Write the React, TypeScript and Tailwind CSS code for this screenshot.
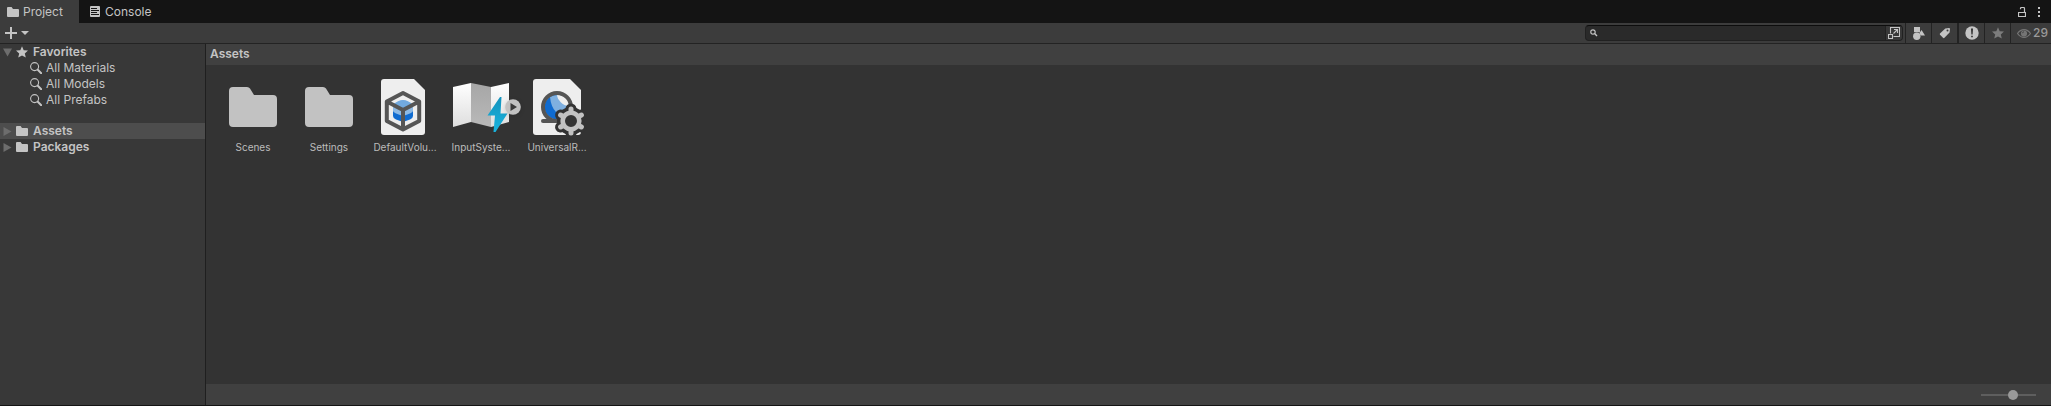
import { useState } from "react";
import type { ReactNode } from "react";

const STAR = "M6 0.3 7.7 4.2 12 4.6 8.8 7.4 9.8 11.6 6 9.4 2.2 11.6 3.2 7.4 0 4.6 4.3 4.2Z";

const FolderIcon = () => (
  <svg width="12" height="10" viewBox="0 0 12 10" className="shrink-0">
    <path d="M0 1Q0 0 1 0H4.6L6 2H11Q12 2 12 3V9Q12 10 11 10H1Q0 10 0 9Z" fill="#c4c4c4" />
  </svg>
);

const ConsoleIcon = () => (
  <svg width="10" height="11" viewBox="0 0 10 11" className="shrink-0">
    <rect width="10" height="11" rx="1" fill="#c4c4c4" />
    <path d="M1 2.5H7M1 4.5H9M1 6.5H7M1 8.5H9" stroke="#141414" />
  </svg>
);

const StarIcon = ({ color }: { color: string }) => (
  <svg width="12" height="12" viewBox="0 0 12 12" className="shrink-0">
    <path d={STAR} fill={color} />
  </svg>
);

const MagnifierIcon = () => (
  <svg width="12" height="12" viewBox="0 0 12 12" className="shrink-0">
    <circle cx="4.6" cy="4.6" r="4" fill="none" stroke="#c4c4c4" strokeWidth="1.1" />
    <path d="M7.8 7.8 11.2 11.2" stroke="#c4c4c4" strokeWidth="2" strokeLinecap="round" />
  </svg>
);

const LockIcon = () => (
  <svg width="8" height="10" viewBox="0 0 8 10">
    <path d="M0.5 5.5H7.5V9.5H0.5ZM2.5 2.2V1.5Q2.5 0.5 3.5 0.5H5.5Q6.5 0.5 6.5 1.5V5.5" fill="none" stroke="#c4c4c4" strokeWidth="1.2" />
  </svg>
);

const KebabIcon = () => (
  <svg width="2" height="10" viewBox="0 0 2 10">
    <path d="M0 0H2V2H0ZM0 4H2V6H0ZM0 8H2V10H0Z" fill="#c4c4c4" />
  </svg>
);

const OpenSearchIcon = () => (
  <svg width="12" height="12" viewBox="0 0 12 12">
    <path d="M2.5 6.5V0.5H11.5V9.5H5.5M0.5 7.5H4.5V11.5H0.5ZM5.5 6.5 9 3M6 2.5H9.5V6" fill="none" stroke="#c4c4c4" strokeWidth="1.1" />
  </svg>
);

const TypeIcon = () => (
  <svg width="12" height="13" viewBox="0 0 12 13">
    <path d="M1 0H7V5.2H1Z" fill="#c4c4c4" />
    <path d="M8.6 3 12 8.6H7.6L6.4 6Z" fill="#c4c4c4" />
    <circle cx="3.8" cy="9.3" r="3.7" fill="#c4c4c4" />
  </svg>
);

const TagIcon = () => (
  <svg width="12" height="12" viewBox="0 0 12 12">
    <path d="M6.3 1.4 10 1Q11 1 11 2L10.6 5.6 5.2 11Q4.6 11.4 4 10.8L1 7.8Q0.5 7.2 1 6.6Z" fill="#c4c4c4" />
    <circle cx="8.5" cy="3.6" r="1" fill="#3c3c3c" />
  </svg>
);

const ImportLogIcon = () => (
  <svg width="14" height="14" viewBox="0 0 14 14">
    <circle cx="7" cy="7" r="6.7" fill="#c4c4c4" />
    <path d="M6 2.5H8L7.6 8.5H6.4ZM6.2 9.7H7.8V11.3H6.2Z" fill="#2e2e2e" />
  </svg>
);

const EyeIcon = () => (
  <svg width="14" height="9" viewBox="0 0 14 9" className="shrink-0">
    <path d="M0.5 4.5Q3.2 0.6 7 0.6T13.5 4.5Q10.8 8.4 7 8.4T0.5 4.5Z" fill="none" stroke="#757575" strokeWidth="1.2" />
    <circle cx="7" cy="4.5" r="3.1" fill="#757575" />
    <path d="M5.4 4.2Q5.6 2.9 7 2.7" fill="none" stroke="#3c3c3c" strokeWidth="0.8" />
  </svg>
);

const Arrow = ({ open }: { open: boolean }) => (
  <svg width="9" height="9" viewBox="0 0 9 9">
    <path d={open ? "M0 0.5H9L4.5 8.5Z" : "M0.5 0V9L8.5 4.5Z"} fill="#6d6d6d" />
  </svg>
);

const BigFolder = () => (
  <svg width="64" height="64" viewBox="0 0 64 64">
    <path d="M8 16Q8 12 12 12H26Q28 12 29 13.5L33 20H52Q56 20 56 24V48Q56 52 52 52H12Q8 52 8 48Z" fill="#c2c2c2" />
  </svg>
);

const VolumeIcon = () => (
  <svg width="64" height="64" viewBox="0 0 64 64">
    <path d="M8 7Q8 4 11 4H41L52 15V57Q52 60 49 60H11Q8 60 8 57Z" fill="#eeeeee" />
    <path d="M20 34V41Q20 43 23 44.5L28 46.2Q30 46.8 32 46.2L37 44.5Q40 43 40 41V34Z" fill="#0f6bd0" />
    <path d="M20 29 30 25 40 29V36Q40 38 30 41Q20 38 20 36Z" fill="#8db9e4" />
    <path d="M20 30Q30 20 40 30L30 36Z" fill="#72a9de" />
    <path d="M30 18 46.2 26.5V46L30 54.4 13.8 46V26.5ZM13.8 26.5 30 35 46.2 26.5M30 35V54" fill="none" stroke="#555555" strokeWidth="4" strokeLinejoin="round" />
  </svg>
);

const InputActionsIcon = () => (
  <svg width="64" height="64" viewBox="0 0 64 64">
    <defs>
      <linearGradient id="mapLight" x1="0" y1="0" x2="0" y2="1">
        <stop offset="0" stopColor="#ffffff" />
        <stop offset="1" stopColor="#dedede" />
      </linearGradient>
      <linearGradient id="mapShade" x1="0" y1="0" x2="0" y2="1">
        <stop offset="0" stopColor="#a6a6a6" />
        <stop offset="1" stopColor="#b9b9b9" />
      </linearGradient>
      <linearGradient id="bolt" x1="0" y1="0" x2="0" y2="1">
        <stop offset="0" stopColor="#1593bd" />
        <stop offset="1" stopColor="#19b4df" />
      </linearGradient>
    </defs>
    <path d="M4 12 22 8V47L4 52Z" fill="url(#mapLight)" />
    <path d="M22 8 42 12V52L22 47Z" fill="url(#mapShade)" />
    <path d="M42 12 60 8V47L42 52Z" fill="url(#mapLight)" />
    <path d="M51 22 38.5 40.5H46L44.5 57H46.5L58.5 38.5H51.5L52.5 22Z" fill="url(#bolt)" />
  </svg>
);

const PipelineIcon = () => (
  <svg width="64" height="64" viewBox="0 0 64 64">
    <path d="M8 7Q8 4 11 4H45L56 15V57Q56 60 53 60H11Q8 60 8 57Z" fill="#eeeeee" />
    <circle cx="32" cy="32" r="12.5" fill="#0f6bd0" />
    <path d="M25 22Q32 18 39 22L45 34 41 42Q36 42 31 37Q26 32 25 22Z" fill="#7fb0e0" />
    <path d="M32 19.5Q43 20 44.5 31Q39 31 35.5 27Q32 23 32 19.5Z" fill="#eeeeee" />
    <circle cx="32" cy="32" r="14" fill="none" stroke="#555555" strokeWidth="4" />
    <path d="M18 46H38" stroke="#555555" strokeWidth="4" strokeLinecap="round" />
    <g transform="translate(46 46)">
      <circle r="14" fill="#333333" />
      <path d="M0-12V12M-10.4-6 10.4 6M-10.4 6 10.4-6" stroke="#333333" strokeWidth="11" strokeLinecap="round" />
      <path d="M0-12V-9M0 12V9M-10.4-6-8-4.6M10.4 6 8 4.6M-10.4 6-8 4.6M10.4-6 8-4.6" stroke="#c2c2c2" strokeWidth="5" strokeLinecap="round" />
      <circle r="8.3" fill="none" stroke="#c2c2c2" strokeWidth="4.6" />
    </g>
  </svg>
);

const assets = [
  { name: "Scenes", icon: <BigFolder /> },
  { name: "Settings", icon: <BigFolder /> },
  { name: "DefaultVolu...", icon: <VolumeIcon /> },
  { name: "InputSyste...", icon: <InputActionsIcon />, expandable: true },
  { name: "UniversalR...", icon: <PipelineIcon /> },
];

const searches = ["All Materials", "All Models", "All Prefabs"];

interface TreeHeadProps {
  label: string;
  icon: ReactNode;
  open?: boolean;
  selected?: boolean;
}

const TreeHead = ({ label, icon, open = false, selected = false }: TreeHeadProps) => (
  <div className={`flex h-4 items-center pl-[3px] font-semibold ${selected ? "bg-[#4d4d4d]" : ""}`}>
    <button aria-label={`Toggle ${label}`} className="mr-1 w-[9px]">
      <Arrow open={open} />
    </button>
    <button className="flex items-center gap-[5px]">
      {icon}
      {label}
    </button>
  </div>
);

const ToolButton = ({ label, children }: { label: string; children: ReactNode }) => (
  <button aria-label={label} className="flex h-full w-[26px] items-center justify-center border-l border-[#232323]">
    {children}
  </button>
);

export default function App() {
  const [query, setQuery] = useState("");
  const [size, setSize] = useState(60);

  return (
    <div className="flex h-screen flex-col border-b border-[#141414] bg-[#383838] font-['Inter',sans-serif] text-[12px] leading-4 text-[#c4c4c4]">
      <header className="flex h-[23px] shrink-0 items-stretch bg-[#141414]">
        <button className="flex w-[79px] items-center gap-1 bg-[#3c3c3c] pl-[7px]">
          <FolderIcon />
          Project
        </button>
        <button className="flex items-center gap-[5px] pl-[11px]">
          <ConsoleIcon />
          Console
        </button>
        <div className="ml-auto flex items-center gap-3 pr-[11px]">
          <button aria-label="Lock">
            <LockIcon />
          </button>
          <button aria-label="More options">
            <KebabIcon />
          </button>
        </div>
      </header>

      <div className="flex h-[21px] shrink-0 items-center border-b border-[#232323] bg-[#3c3c3c]">
        <button aria-label="Create" className="flex items-center gap-1 pl-[5px]">
          <svg width="12" height="12" viewBox="0 0 12 12">
            <path d="M6 0V12M0 6H12" stroke="#c4c4c4" strokeWidth="2" />
          </svg>
          <svg width="8" height="4" viewBox="0 0 8 4">
            <path d="M0 0H8L4 4Z" fill="#c4c4c4" />
          </svg>
        </button>
        <div className="ml-auto mr-0.5 flex h-4 w-[318px] items-center overflow-hidden rounded border border-[#212121] border-t-[#0d0d0d] bg-[#2a2a2a]">
          <label htmlFor="search" className="pl-1">
            <svg width="8" height="8" viewBox="0 0 8 8">
              <circle cx="3" cy="3" r="2.2" fill="none" stroke="#c4c4c4" strokeWidth="1.2" />
              <path d="M4.6 4.6 7 7" stroke="#c4c4c4" strokeWidth="1.4" />
            </svg>
          </label>
          <input
            id="search"
            aria-label="Search"
            value={query}
            onChange={(e) => setQuery(e.target.value)}
            className="min-w-0 flex-1 px-1 outline-none"
          />
          <button aria-label="Open in Search" className="flex h-full w-[17px] items-center justify-center border-l border-[#212121] bg-[#383838]">
            <OpenSearchIcon />
          </button>
        </div>
        <ToolButton label="Search by type">
          <TypeIcon />
        </ToolButton>
        <ToolButton label="Search by label">
          <TagIcon />
        </ToolButton>
        <div className="h-full w-px bg-[#232323]" />
        <ToolButton label="Search by import log">
          <ImportLogIcon />
        </ToolButton>
        <ToolButton label="Save search">
          <StarIcon color="#7c7c7c" />
        </ToolButton>
        <button aria-label="Hidden packages" className="flex h-full w-[41px] items-center gap-0.5 border-l border-[#232323] pl-1.5 text-[12px] font-medium text-[#9a9a9a]">
          <EyeIcon />
          29
        </button>
      </div>

      <div className="flex min-h-0 flex-1">
        <aside className="w-[206px] shrink-0 border-r border-[#1f1f1f]">
          <TreeHead label="Favorites" icon={<StarIcon color="#c4c4c4" />} open />
          <ul>
            {searches.map((name) => (
              <li key={name}>
                <button className="flex h-4 items-center gap-1 pl-[30px]">
                  <MagnifierIcon />
                  {name}
                </button>
              </li>
            ))}
          </ul>
          <div className="mt-[15px]">
            <TreeHead label="Assets" icon={<FolderIcon />} selected />
            <TreeHead label="Packages" icon={<FolderIcon />} />
          </div>
        </aside>

        <main className="flex min-w-0 flex-1 flex-col bg-[#333333]">
          <h1 className="h-[21px] shrink-0 bg-[#404040] pl-1 font-semibold leading-5">Assets</h1>
          <div className="flex flex-1 flex-wrap content-start gap-3 pl-[15px] pt-[10px]">
            {assets.map((asset) => (
              <div key={asset.name} className="relative w-16">
                <button className="flex w-full flex-col items-center text-[10px] text-[#bcbcbc]">
                  {asset.icon}
                  {asset.name}
                </button>
                {asset.expandable && (
                  <button aria-label="Expand" className="absolute -right-2 top-6 drop-shadow-sm">
                    <svg width="16" height="16" viewBox="0 0 16 16">
                      <circle cx="8" cy="8" r="7.8" fill="#c2c2c2" />
                      <path d="M5.5 4V12L12 8Z" fill="#3a3a3a" />
                    </svg>
                  </button>
                )}
              </div>
            ))}
          </div>
          <footer className="flex h-[21px] shrink-0 items-center justify-end bg-[#404040] pr-[15px]">
            <input
              type="range"
              aria-label="Icon size"
              value={size}
              onChange={(e) => setSize(Number(e.target.value))}
              className="h-[10px] w-[55px] appearance-none bg-transparent [&::-webkit-slider-runnable-track]:h-0.5 [&::-webkit-slider-runnable-track]:bg-[#5e5e5e] [&::-webkit-slider-thumb]:-mt-1 [&::-webkit-slider-thumb]:size-[10px] [&::-webkit-slider-thumb]:appearance-none [&::-webkit-slider-thumb]:rounded-full [&::-webkit-slider-thumb]:bg-[#999999]"
            />
          </footer>
        </main>
      </div>
    </div>
  );
}
